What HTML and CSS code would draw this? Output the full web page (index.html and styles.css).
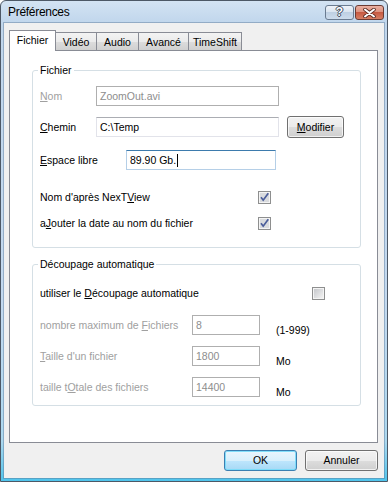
FILE: index.html
```html
<!DOCTYPE html>
<html>
<head>
<meta charset="utf-8">
<title>Préférences</title>
<link rel="stylesheet" href="styles.css">
</head>
<body>
<div class="window">
  <div class="titlebar">
    <span class="title">Préférences</span>
    <div class="caption">
      <span class="cbtn help">?</span>
      <span class="cbtn close">
        <svg width="13" height="10" viewBox="0 0 13 10">
          <path d="M2 1.5 L11 8.5 M11 1.5 L2 8.5" stroke="#5a2a22" stroke-width="3.6" stroke-linecap="round" fill="none"/>
          <path d="M2 1.5 L11 8.5 M11 1.5 L2 8.5" stroke="#ffffff" stroke-width="2" stroke-linecap="round" fill="none"/>
        </svg>
      </span>
    </div>
  </div>
  <div class="client">
    <div class="tabs">
      <div class="tab active t-fichier">Fichier</div>
      <div class="tab t-video">Vidéo</div>
      <div class="tab t-audio">Audio</div>
      <div class="tab t-avance">Avancé</div>
      <div class="tab t-timeshift">TimeShift</div>
    </div>
    <div class="panel">
      <div class="group g1">
        <div class="legend">Fichier</div>
        <div class="row r1">
          <span class="lbl dis w56"><u>N</u>om</span>
          <div class="edit dis w183">ZoomOut.avi</div>
        </div>
        <div class="row r2">
          <span class="lbl w56"><u>C</u>hemin</span>
          <div class="edit norm w183">C:\Temp</div>
          <button class="btn modifier"><u>M</u>odifier</button>
        </div>
        <div class="row r3">
          <span class="lbl w86"><u>E</u>space libre</span>
          <div class="edit focus w150">89.90 Gb.<span class="caret"></span></div>
        </div>
        <div class="crow r4">
          <span class="lbl w218">Nom d'après NexT<u>V</u>iew</span>
          <svg class="chk" width="13" height="13" viewBox="0 0 13 13">
            <rect x="0.5" y="0.5" width="12" height="12" fill="#f4f4f4" stroke="#8e8f8f"/>
            <rect x="2" y="2" width="9" height="9" fill="#d9dbde"/>
            <path d="M3 6.3 L5.2 9.2 L10.3 2.2" fill="none" stroke="#4a5d9a" stroke-width="1.7"/>
          </svg>
        </div>
        <div class="crow r5">
          <span class="lbl w218">a<u>J</u>outer la date au nom du fichier</span>
          <svg class="chk" width="13" height="13" viewBox="0 0 13 13">
            <rect x="0.5" y="0.5" width="12" height="12" fill="#f4f4f4" stroke="#8e8f8f"/>
            <rect x="2" y="2" width="9" height="9" fill="#d9dbde"/>
            <path d="M3 6.3 L5.2 9.2 L10.3 2.2" fill="none" stroke="#4a5d9a" stroke-width="1.7"/>
          </svg>
        </div>
      </div>
      <div class="group g2">
        <div class="legend">Découpage automatique</div>
        <div class="crow r6">
          <span class="lbl w272">utiliser le <u>D</u>écoupage automatique</span>
          <svg class="chk" width="13" height="13" viewBox="0 0 13 13">
            <defs>
              <linearGradient id="ug" x1="0" y1="0" x2="1" y2="1">
                <stop offset="0" stop-color="#c6c8cc"/>
                <stop offset="1" stop-color="#f2f2f2"/>
              </linearGradient>
            </defs>
            <rect x="0.5" y="0.5" width="12" height="12" fill="#f4f4f4" stroke="#8e8f8f"/>
            <rect x="2" y="2" width="9" height="9" fill="url(#ug)"/>
          </svg>
        </div>
        <div class="row r7">
          <span class="lbl dis w152">nombre maximum de <u>F</u>ichiers</span>
          <div class="edit dis w68">8</div>
          <span class="unit">(1-999)</span>
        </div>
        <div class="row r8">
          <span class="lbl dis w152"><u>T</u>aille d'un fichier</span>
          <div class="edit dis w68">1800</div>
          <span class="unit">Mo</span>
        </div>
        <div class="row r9">
          <span class="lbl dis w152">taille t<u>O</u>tale des fichiers</span>
          <div class="edit dis w68">14400</div>
          <span class="unit">Mo</span>
        </div>
      </div>
    </div>
    <div class="footer">
      <button class="btn dlg default">OK</button>
      <button class="btn dlg">Annuler</button>
    </div>
  </div>
</div>
</body>
</html>
```

FILE: styles.css
```css
* { box-sizing: border-box; }
html, body { margin: 0; padding: 0; }
body {
  width: 388px;
  height: 482px;
  overflow: hidden;
  font-family: "Liberation Sans", Arial, sans-serif;
  font-size: 10.5px;
  color: #000;
  background: #fff;
}
.window {
  width: 388px;
  height: 482px;
  border: 1px solid #4d5866;
  border-radius: 6px 6px 0 0;
  background: linear-gradient(to bottom, #d3e3f3 0px, #c0d6ec 22px, #c3d9ef 300px, #acd8ef 440px, #4fc4ec 100%);
  display: flex;
  flex-direction: column;
}
.titlebar {
  height: 22px;
  flex: none;
  display: flex;
  align-items: flex-start;
  padding-left: 7px;
  padding-right: 3px;
}
.title {
  flex: 1;
  font-size: 12px;
  line-height: 14px;
  margin-top: 4px;
  letter-spacing: -0.3px;
}
.caption {
  display: flex;
  gap: 1px;
  margin-top: 4px;
}
.cbtn {
  width: 29px;
  height: 15px;
  border: 1px solid #6a7b90;
  border-radius: 3px;
  display: flex;
  align-items: center;
  justify-content: center;
}
.help {
  background: linear-gradient(#eef3f9, #d8e3ef 50%, #bfd0e3 50%, #cddcec);
  color: #fff;
  font-weight: bold;
  font-size: 12px;
  line-height: 13px;
  text-shadow: 1px 0 0 #3c4a5c, -1px 0 0 #3c4a5c, 0 1px 0 #3c4a5c, 0 -1px 0 #3c4a5c;
}
.close {
  border-color: #6b3b33;
  background: linear-gradient(#eab0a2, #dc8f7b 50%, #c75a42 50%, #d77e63);
}
.client {
  flex: 1;
  margin: 0 3px 3px 3px;
  background: #f0f0f0;
  padding: 7px 6px 0 5px;
  display: flex;
  flex-direction: column;
  box-shadow: 0 0 0 1px rgba(90, 120, 150, 0.45);
}
.tabs {
  flex: none;
  height: 20px;
  display: flex;
  align-items: flex-end;
}
.tab {
  height: 18px;
  padding-top: 3px;
  line-height: 13px;
  text-align: center;
  border: 1px solid #898c95;
  border-bottom: none;
  background: linear-gradient(#f3f3f3, #ebebeb 50%, #dddddd 50%, #d0d0d0);
  margin-left: -1px;
}
.tab.active {
  height: 21px;
  margin-left: 0;
  margin-bottom: -1px;
  background: #fff;
  position: relative;
  z-index: 1;
}
.t-fichier { width: 47px; }
.t-video { width: 42px; }
.t-audio { width: 43px; }
.t-avance { width: 51px; }
.t-timeshift { width: 54px; }
.panel {
  flex: none;
  height: 393px;
  border: 1px solid #898c95;
  background: #fff;
  padding: 19px 0 0 22px;
}
.group {
  width: 329px;
  border: 1px solid #d5dfe5;
  border-radius: 3px;
  padding: 0 0 0 7px;
}
.g1 { height: 178px; }
.g2 { height: 142px; margin-top: 16px; }
.legend {
  margin-top: -7px;
  margin-left: -2px;
  padding: 0 2px;
  background: #fff;
  line-height: 13px;
  width: max-content;
}
.row {
  display: flex;
  align-items: center;
  height: 20px;
}
.crow {
  display: flex;
  align-items: center;
  height: 13px;
}
.r1 { margin-top: 9px; }
.r2 { margin-top: 11px; }
.r3 { margin-top: 13px; }
.r4 { margin-top: 21px; }
.r5 { margin-top: 13px; }
.r6 { margin-top: 16px; }
.r7 { margin-top: 15px; }
.r8 { margin-top: 11px; }
.r9 { margin-top: 11px; }
.lbl {
  flex: none;
  line-height: 13px;
  white-space: nowrap;
}
.lbl.dis { color: #a0a0a0; }
.w56 { width: 56px; }
.w86 { width: 86px; }
.w218 { width: 218px; }
.w272 { width: 272px; }
.w152 { width: 152px; }
.edit {
  flex: none;
  height: 20px;
  border: 1px solid;
  padding: 0 3px;
  line-height: 18px;
  background: #fff;
  white-space: nowrap;
  overflow: hidden;
}
.edit.dis { border-color: #afafaf; color: #8d8d8d; }
.edit.norm { border-color: #e2e3ea; border-top-color: #abadb3; }
.edit.focus { border-color: #b5cfe7; border-top-color: #3d7bad; }
.w183 { width: 183px; }
.w150 { width: 150px; }
.w68 { width: 68px; }
.caret {
  display: inline-block;
  width: 1px;
  height: 13px;
  background: #000;
  vertical-align: -3px;
  margin-left: 1px;
}
.chk { flex: none; display: block; }
.unit {
  align-self: flex-start;
  margin-top: 9px;
  margin-left: 16px;
  line-height: 13px;
}
.btn {
  font-family: "Liberation Sans", Arial, sans-serif;
  font-size: 10.5px;
  color: #000;
  border: 1px solid #707070;
  border-radius: 3px;
  background: linear-gradient(#f2f2f2, #ebebeb 50%, #dddddd 50%, #cfcfcf);
  box-shadow: inset 0 0 0 1px rgba(255, 255, 255, 0.7);
  padding: 0;
  margin: 0;
  line-height: 13px;
  text-align: center;
}
.modifier {
  flex: none;
  width: 57px;
  height: 22px;
  margin-left: 8px;
}
.footer {
  flex: none;
  display: flex;
  justify-content: flex-end;
  gap: 8px;
  margin-top: 7px;
}
.dlg {
  width: 73px;
  height: 21px;
}
.dlg.default {
  border-color: #3c7fb1;
  background: linear-gradient(#eaf6fd, #d9f0fc 50%, #bee6fd 50%, #a7d9f5);
  box-shadow: inset 0 0 0 1px rgba(120, 220, 250, 0.9);
}
```
